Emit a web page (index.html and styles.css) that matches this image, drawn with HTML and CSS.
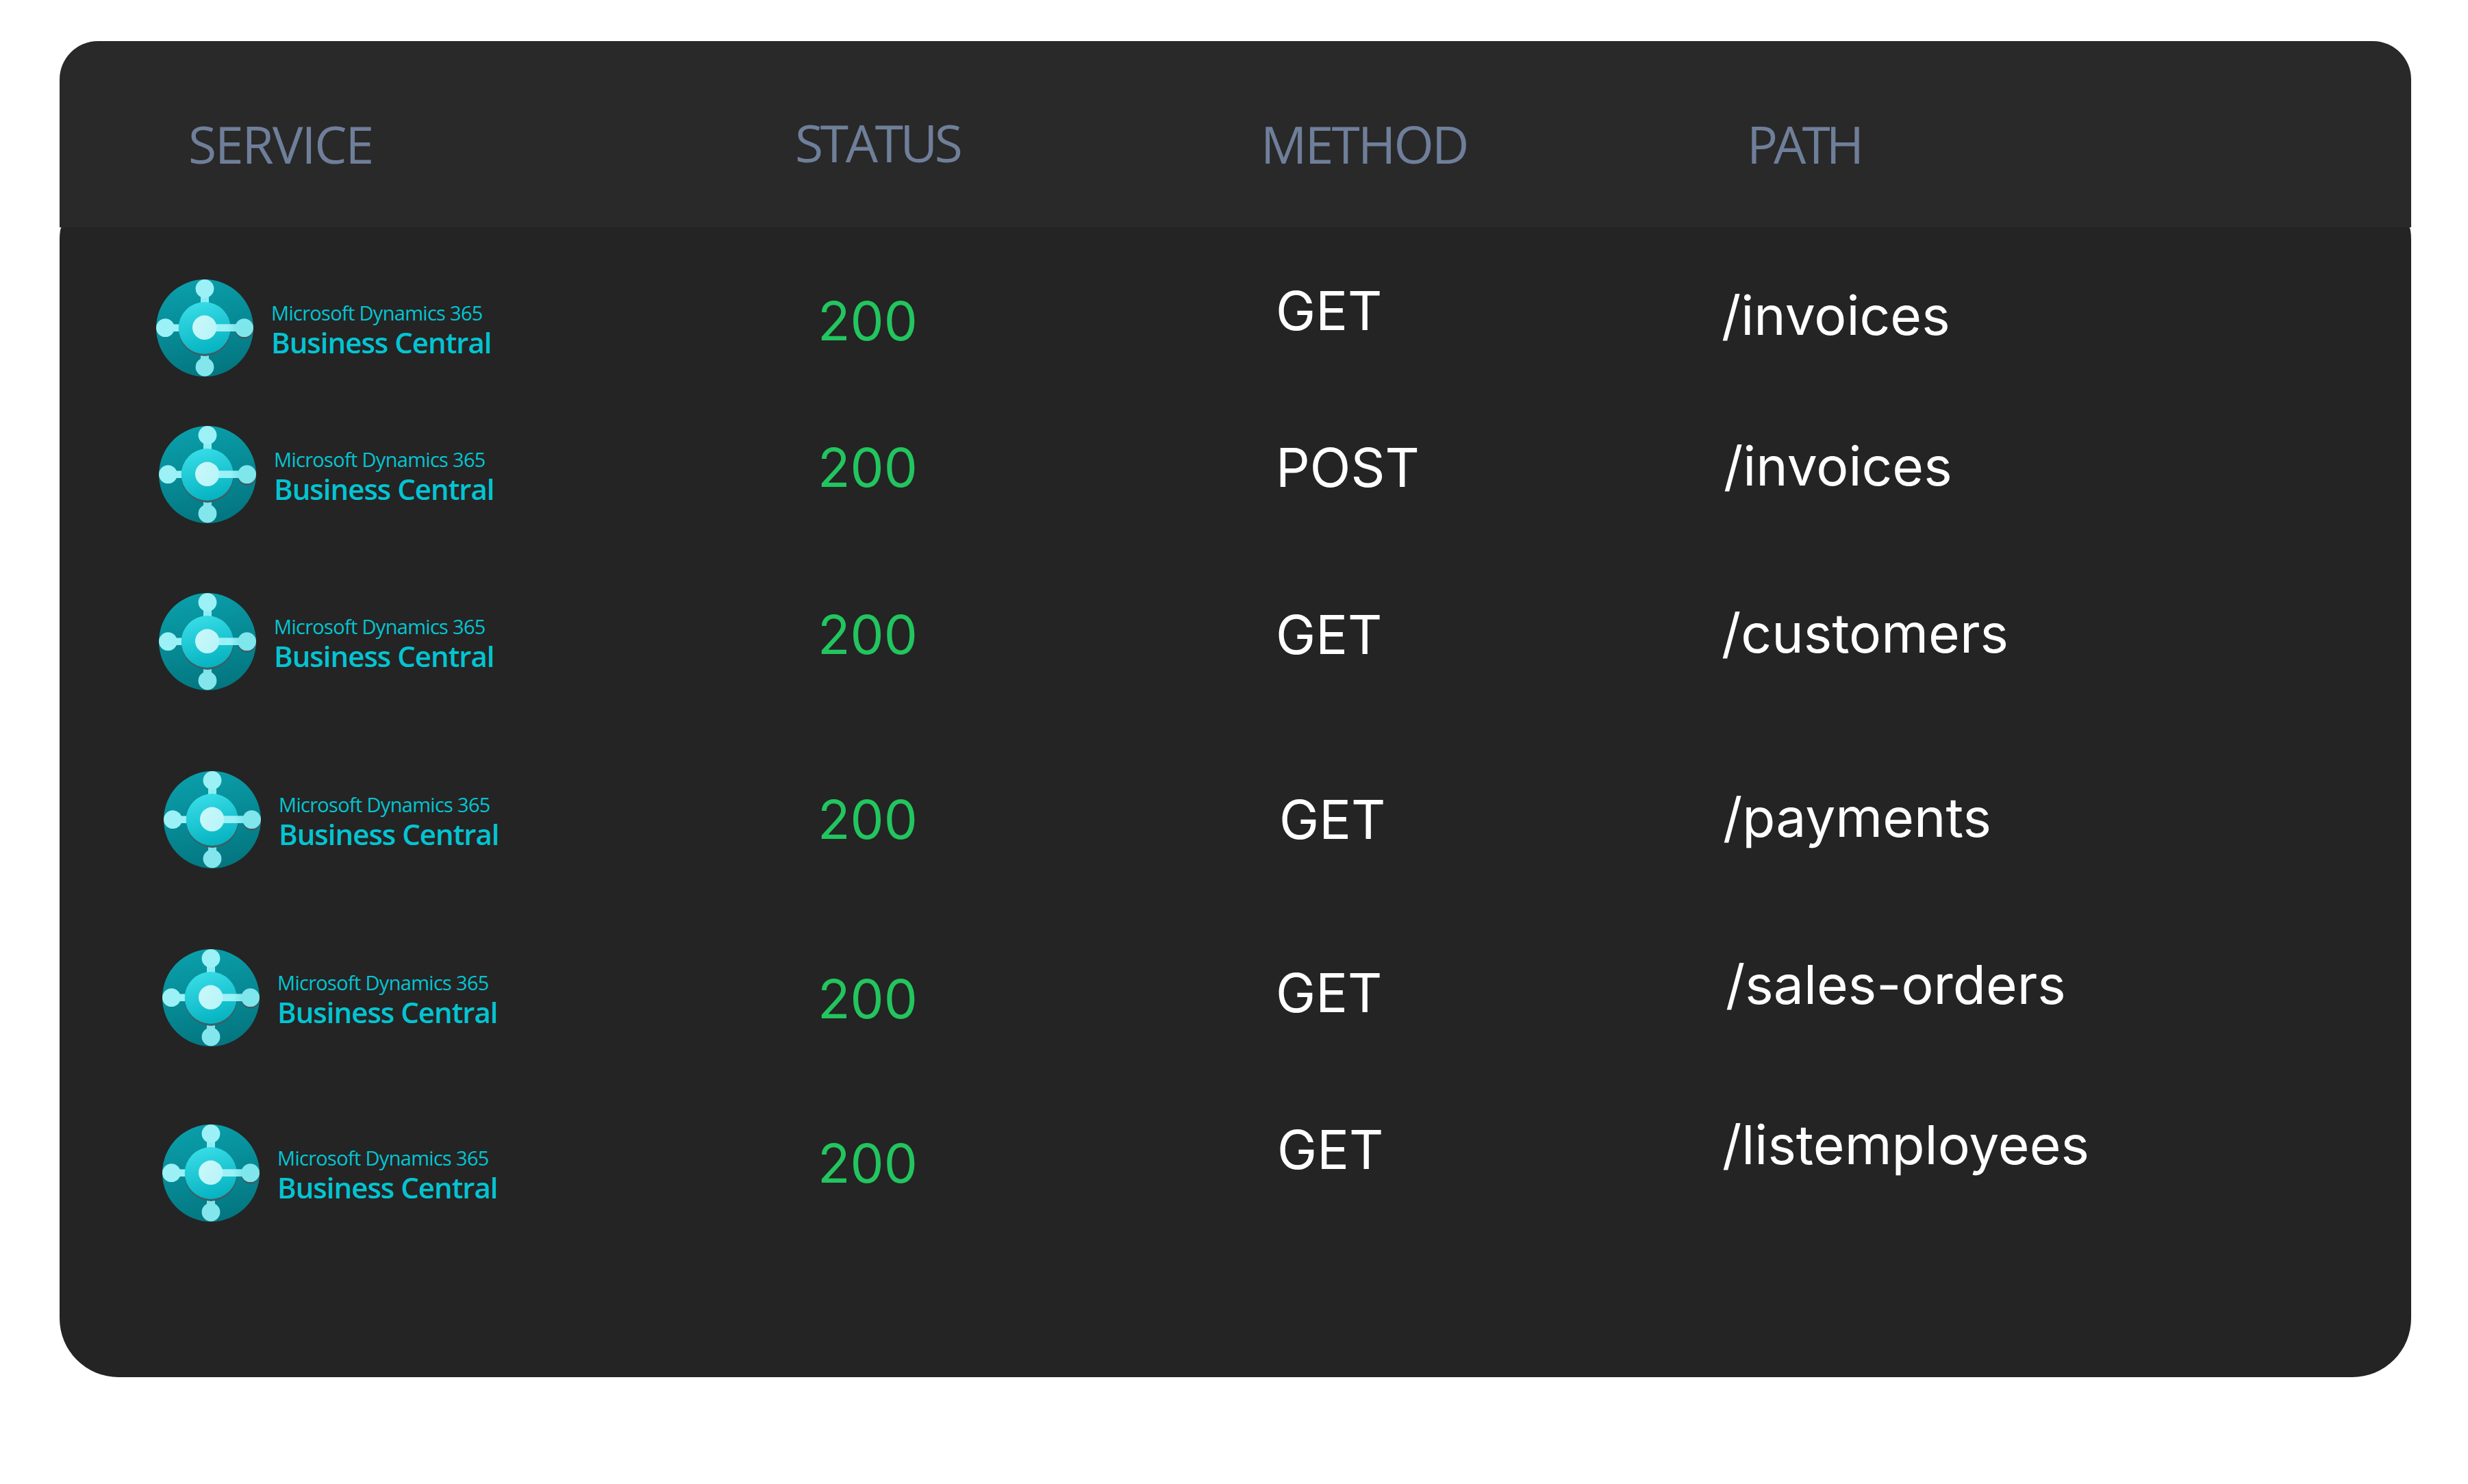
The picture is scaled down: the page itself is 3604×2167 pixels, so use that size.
FILE: index.html
```html
<!DOCTYPE html>
<html lang="en">
<head>
<meta charset="utf-8">
<title>Requests</title>
<link rel="stylesheet" href="styles.css">
</head>
<body>
<svg class="defs" width="0" height="0" aria-hidden="true">
  <defs>
    <linearGradient id="disc" x1="0.35" y1="0" x2="0.6" y2="1">
      <stop offset="0" stop-color="#0a9fab"/>
      <stop offset="1" stop-color="#03757f"/>
    </linearGradient>
    <linearGradient id="hub" x1="0.3" y1="0" x2="0.6" y2="1">
      <stop offset="0" stop-color="#38dde7"/>
      <stop offset="1" stop-color="#05b2c0"/>
    </linearGradient>
    <linearGradient id="bar" x1="0" y1="0" x2="1" y2="0">
      <stop offset="0" stop-color="#9bf1f6"/>
      <stop offset="0.65" stop-color="#9bf1f6"/>
      <stop offset="1" stop-color="#72e2e9"/>
    </linearGradient>
    <linearGradient id="core" x1="0" y1="0.2" x2="1" y2="0.8">
      <stop offset="0" stop-color="#c9f8fa"/>
      <stop offset="1" stop-color="#b7f4f8"/>
    </linearGradient>
    <symbol id="bc" viewBox="0 0 142 142">
      <circle cx="71" cy="71" r="71" fill="url(#disc)"/>
      <rect x="65" y="20" width="12" height="22" fill="#8ceef3"/>
      <rect x="65" y="100" width="12" height="10" fill="#56838a"/>
      <rect x="65" y="106" width="12" height="12" fill="#7fe3ea"/>
      <rect x="18" y="65.5" width="30" height="10.5" fill="#9bf1f6"/>
      <circle cx="71" cy="74" r="38" fill="#3a6068"/>
      <circle cx="70.7" cy="71" r="38" fill="url(#hub)"/>
      <circle cx="71" cy="13.5" r="13.4" fill="#9bf1f6"/>
      <circle cx="71" cy="128" r="13.4" fill="#82e6ec"/>
      <circle cx="13.4" cy="70.7" r="13.4" fill="#9bf1f6"/>
      <circle cx="128.6" cy="73.4" r="13.4" fill="#3a6068"/>
      <rect x="71" y="65.3" width="50" height="10.7" fill="url(#bar)"/>
      <circle cx="128.6" cy="70.7" r="13.4" fill="#7fe6ec"/>
      <circle cx="70.7" cy="70.3" r="17.7" fill="url(#core)"/>
    </symbol>
  </defs>
</svg>
<main class="card">
  <header class="head">
    <div class="th th-service">SERVICE</div>
    <div class="th th-status">STATUS</div>
    <div class="th th-method">METHOD</div>
    <div class="th th-path">PATH</div>
  </header>
  <section class="body">
    <div class="row r1">
      <div class="svc"><svg class="mark"><use href="#bc"/></svg><div class="brand"><span class="ms">Microsoft Dynamics 365</span><span class="bc">Business Central</span></div></div>
      <div class="code">200</div><div class="method">GET</div><div class="path">/invoices</div>
    </div>
    <div class="row r2">
      <div class="svc"><svg class="mark"><use href="#bc"/></svg><div class="brand"><span class="ms">Microsoft Dynamics 365</span><span class="bc">Business Central</span></div></div>
      <div class="code">200</div><div class="method">POST</div><div class="path">/invoices</div>
    </div>
    <div class="row r3">
      <div class="svc"><svg class="mark"><use href="#bc"/></svg><div class="brand"><span class="ms">Microsoft Dynamics 365</span><span class="bc">Business Central</span></div></div>
      <div class="code">200</div><div class="method">GET</div><div class="path">/customers</div>
    </div>
    <div class="row r4">
      <div class="svc"><svg class="mark"><use href="#bc"/></svg><div class="brand"><span class="ms">Microsoft Dynamics 365</span><span class="bc">Business Central</span></div></div>
      <div class="code">200</div><div class="method">GET</div><div class="path">/payments</div>
    </div>
    <div class="row r5">
      <div class="svc"><svg class="mark"><use href="#bc"/></svg><div class="brand"><span class="ms">Microsoft Dynamics 365</span><span class="bc">Business Central</span></div></div>
      <div class="code">200</div><div class="method">GET</div><div class="path">/sales-orders</div>
    </div>
    <div class="row r6">
      <div class="svc"><svg class="mark"><use href="#bc"/></svg><div class="brand"><span class="ms">Microsoft Dynamics 365</span><span class="bc">Business Central</span></div></div>
      <div class="code">200</div><div class="method">GET</div><div class="path">/listemployees</div>
    </div>
  </section>
</main>
</body>
</html>
```
FILE: styles.css
```css
html, body { margin: 0; background: #fff; }
body { width: 3604px; height: 2167px; padding: 60px 83px 0 87px; box-sizing: border-box; overflow: hidden; }
.defs { display: block; }
.card { width: 3434px; height: 1951px; display: flex; flex-direction: column; }
.head { height: 272px; flex: none; background: #292929; border-radius: 56px 56px 0 0; display: grid; grid-template-columns: 1074px 680px 710px 1fr; color: #6f7f9a; font-family: "Open Sans", sans-serif; font-weight: 400; font-size: 75px; letter-spacing: -2.4px; }
.th { line-height: 100px; }
.th-service { margin: 100px 0 0 188px; letter-spacing: -2.1px; }
.th-status { margin: 98px 0 0 0; letter-spacing: -4.4px; }
.th-method { margin: 100px 0 0 0; letter-spacing: -2.8px; }
.th-path { margin: 100px 0 0 0; letter-spacing: -6px; }
.body { flex: 1; min-height: 0; background: #242424; border-radius: 3px 3px 86px 86px / 18px 18px 86px 86px; }

.row { box-sizing: border-box; display: grid; grid-template-columns: 1107px 669px 651px 1fr; align-items: start; font-family: Inter, sans-serif; font-weight: 400; font-size: 78px; line-height: 100px; color: #fff; --svc-x: 145px; --code-y: 11px; --method-x: 0px; --method-y: 11px; --path-x: 0px; --path-y: 9px; }
.r1 { height: 290px; padding-top: 76px; --svc-x: 141px; --method-y: -4px; --path-y: 3px; }
.r2 { height: 244px; --path-x: 3px; --path-y: 9px; }
.r3 { height: 260px; }
.r4 { height: 260px; --svc-x: 152px; --code-y: 21px; --method-x: 5px; --method-y: 21px; --path-x: 2px; --path-y: 18px; }
.r5 { height: 256px; --svc-x: 150px; --code-y: 23px; --method-y: 14px; --path-x: 6px; --path-y: 2px; }
.r6 { height: 256px; --svc-x: 150px; --code-y: 7px; --method-x: 2px; --method-y: -13px; --path-x: 1px; --path-y: -20px; }

.svc { display: flex; align-items: center; gap: 26px; height: 142px; padding-left: var(--svc-x); }
.mark { width: 142px; height: 142px; flex: none; }
.brand { display: flex; flex-direction: column; padding-top: 2px; font-family: "Open Sans", sans-serif; color: #04c4d2; white-space: nowrap; }
.ms { font-size: 29px; line-height: 40px; font-weight: 400; letter-spacing: -.7px; }
.bc { font-size: 42px; line-height: 46px; font-weight: 600; letter-spacing: -1px; }
.code { color: #22c55e; margin-top: var(--code-y); }
.method { margin: var(--method-y) 0 0 var(--method-x); }
.path { font-size: 78.6px; margin: var(--path-y) 0 0 var(--path-x); }
```
